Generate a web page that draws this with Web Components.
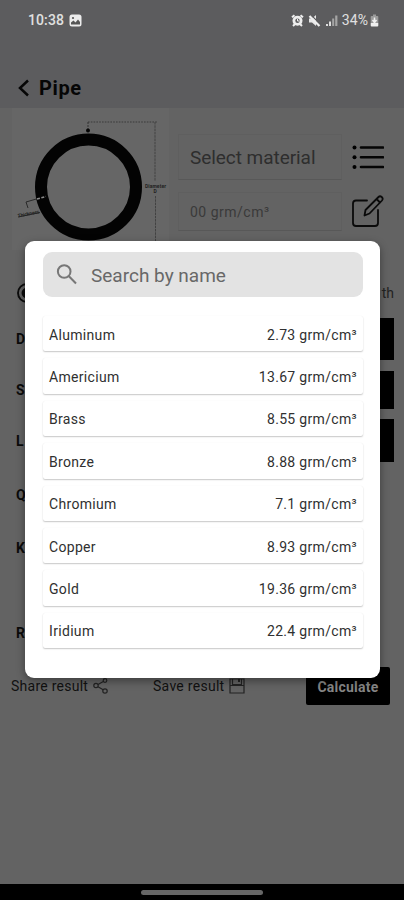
<!DOCTYPE html>
<html lang="en">
<head>
<meta charset="utf-8">
<title>Pipe</title>
<style>
  html, body { margin: 0; padding: 0; }
  body {
    width: 404px;
    height: 900px;
    overflow: hidden;
    font-family: Roboto, Arial, sans-serif;
    color: #0b0b0b;
    background: #636363;
  }
</style>
</head>
<body>
<pipe-screen></pipe-screen>

<script>
/* ===== STATUS BAR ===== */
class StatusBar extends HTMLElement {
  connectedCallback() {
    const shadow = this.attachShadow({ mode: 'open' });
    shadow.innerHTML = `
<style>
  :host {
    display: flex;
    align-items: center;
    justify-content: space-between;
    height: 40px;
    padding: 0 25px 0 28px;
    box-sizing: border-box;
    color: #e0e0e0;
    font-size: 14px;
    font-weight: 500;
  }
  div { display: flex; align-items: center; }
  svg { display: block; }
  .left { gap: 5px; }
  .left span { letter-spacing: 0.1px; }
  .right { gap: 4px; }
  .right span { letter-spacing: 0.1px; font-weight: 400; margin-right: -2px; }
</style>
<div class="left">
  <span>10:38</span>
  <svg width="13" height="13" viewBox="0 0 13 13">
    <rect x=".5" y=".5" width="12" height="12" rx="2.500" fill="#ececec"/>
    <path d="M2 10.500V8.500L4.500 6.500 6.500 8.500 9 5.500 11 8V10.500Z" fill="#555"/>
    <circle cx="4" cy="4" r="1.100" fill="#555"/>
  </svg>
</div>
<div class="right">
  <svg width="13" height="13" viewBox="0 0 13 13">
    <path d="M1 3.200 3.500 1.200M12 3.200 9.500 1.200M2 12 4 10M11 12 9 10" stroke="#eee" stroke-width="2"/>
    <circle cx="6.500" cy="6.800" r="5" fill="#eee"/>
    <circle cx="6.500" cy="6.800" r="2.200" fill="#5c5c5e"/>
    <path d="M6.500 5V7H8.200" fill="none" stroke="#eee" stroke-width="1"/>
  </svg>
  <svg width="13" height="13" viewBox="0 0 13 13">
    <path d="M1 4.500H4L8 1V12L4 8.500H1Z" fill="#e8e8e8"/>
    <path d="M3 1 12 10" stroke="#5c5c5e" stroke-width="1.200"/>
    <path d="M1.500 2 11.500 12" stroke="#eee" stroke-width="2.200"/>
  </svg>
  <svg width="13" height="13" viewBox="0 0 13 13">
    <path d="M1 12V10H3V12ZM4 12V7.500H6V12Z" fill="#ddd"/>
    <path d="M7.200 12V4.500H9.200V12ZM10.200 12V1.500H12.400V12Z" fill="#a5a5a5"/>
  </svg>
  <span>34%</span>
  <svg width="9" height="13" viewBox="0 0 9 13">
    <path d="M3 .5H6V2H7.500Q8.300 2 8.300 3V9H.7V3Q.7 2 1.500 2H3Z" fill="#9b9b9b"/>
    <path d="M.7 9H8.300V11.500Q8.300 12.500 7.300 12.500H1.700Q.7 12.500 .7 11.500Z" fill="#f0f0f0"/>
    <path d="M4.500 3.500V8M2.500 6 4.500 8.500 6.500 6" fill="none" stroke="#f0f0f0" stroke-width="1.500"/>
  </svg>
</div>
`;
  }
}
customElements.define('status-bar', StatusBar);

/* ===== APP BAR ===== */
class AppHeader extends HTMLElement {
  connectedCallback() {
    const shadow = this.attachShadow({ mode: 'open' });
    shadow.innerHTML = `
<style>
  :host {
    display: flex;
    align-items: center;
    gap: 9px;
    height: 68px;
    padding: 27px 18px 0;
    box-sizing: border-box;
    font-size: 20px;
    font-weight: 700;
    letter-spacing: 0.6px;
    color: #060606;
  }
  svg { display: block; }
</style>
<svg width="12" height="18" viewBox="0 0 12 18">
  <path d="M10 1.500 2 9 10 16.500" fill="none" stroke="#060606" stroke-width="2.500"/>
</svg>
<slot></slot>
`;
  }
}
customElements.define('app-header', AppHeader);

/* ===== PIPE CROSS-SECTION ===== */
class PipeDiagram extends HTMLElement {
  connectedCallback() {
    const shadow = this.attachShadow({ mode: 'open' });
    shadow.innerHTML = `
<style>
  :host { display: block; width: 157px; height: 142px; background: #666; }
  svg { display: block; }
  text { font-size: 5px; font-weight: 700; fill: #222; }
</style>
<svg width="157" height="142" viewBox="12 108 157 142">
  <circle cx="88.500" cy="187" r="47.500" fill="none" stroke="#030303" stroke-width="12"/>
  <path d="M88 122H157" fill="none" stroke="#3a3a3a" stroke-width="1.200" stroke-dasharray="1.600 1.200"/>
  <path d="M155 122V181M155.500 196V250" fill="none" stroke="#424242" stroke-width="1" stroke-dasharray="2.500 .8"/>
  <path d="M88 122V130" stroke="#333" stroke-width="1" stroke-dasharray="2 1"/>
  <circle cx="88" cy="130.500" r="2" fill="#050505"/>
  <text x="145" y="187.500" textLength="21">Diameter</text>
  <text x="153.500" y="192.500">D</text>
  <path d="M28 208 26 202 38 198.500M18 217 40 212.500" fill="none" stroke="#292929" stroke-width="1"/>
  <text x="18" y="217.500" textLength="22" transform="rotate(-11 18 217.500)">Thickness</text>
  <path d="M37 199 46 196.500" stroke="#8a8a8a" stroke-width="1.600" stroke-dasharray="3 1.500"/>
</svg>
`;
  }
}
customElements.define('pipe-diagram', PipeDiagram);

/* ===== MATERIAL FIELD + ICON BUTTON ===== */
class MaterialField extends HTMLElement {
  connectedCallback() {
    const shadow = this.attachShadow({ mode: 'open' });
    shadow.innerHTML = `
<style>
  :host { display: flex; align-items: center; gap: 10px; }
  .box {
    display: flex;
    align-items: center;
    width: 164px;
    height: 100%;
    padding-left: 11px;
    box-sizing: border-box;
    border: 1px solid #5f5f5f;
    border-bottom-color: #585858;
    color: var(--field-color, #2e2e2e);
    white-space: nowrap;
  }
  ::slotted(svg) { display: block; }
</style>
<div class="box"><slot></slot></div>
<slot name="icon"></slot>
`;
  }
}
customElements.define('material-field', MaterialField);

/* ===== FORM ROW ===== */
class FormRow extends HTMLElement {
  connectedCallback() {
    const shadow = this.attachShadow({ mode: 'open' });
    shadow.innerHTML = `
<style>
  :host {
    display: flex;
    align-items: center;
    justify-content: space-between;
    padding: 0 10px 0 16px;
    box-sizing: border-box;
    font-size: 14px;
    font-weight: 700;
  }
  .unit { width: 70px; height: 100%; background: #000; }
  :host(:not([unit])) .unit { display: none; }
</style>
<slot></slot>
<div class="unit"></div>
`;
  }
}
customElements.define('form-row', FormRow);

/* ===== BOTTOM ACTIONS ===== */
class ResultActions extends HTMLElement {
  connectedCallback() {
    const shadow = this.attachShadow({ mode: 'open' });
    shadow.innerHTML = `
<style>
  :host {
    display: flex;
    align-items: center;
    height: 38px;
    padding: 0 14px 0 11px;
    font-size: 14px;
    color: #111;
  }
  .act { display: flex; align-items: center; gap: 5px; width: 142px; letter-spacing: 0.25px; }
  .save { letter-spacing: 0.28px; width: 153px; }
  svg { display: block; }
  .calc {
    display: flex;
    align-items: center;
    justify-content: center;
    width: 84px;
    height: 38px;
    padding-top: 2px;
    box-sizing: border-box;
    border-radius: 2px;
    background: #000;
    color: #858585;
    font-weight: 700;
    letter-spacing: 0.25px;
  }
</style>
<div class="act">Share result
  <svg width="16" height="16" viewBox="0 0 16 16" fill="none" stroke="#222" stroke-width="1.200">
    <circle cx="3" cy="7.500" r="2.200"/><circle cx="12" cy="2.500" r="1.800"/><circle cx="12" cy="13" r="2.200"/>
    <path d="M5 6.500 10.300 3.500M5 8.800 10.200 11.800"/>
  </svg>
</div>
<div class="act save">Save result
  <svg width="16" height="16" viewBox="0 0 16 16" fill="none" stroke="#222" stroke-width="1.200">
    <path d="M1 1H15V15H1ZM3.500 1V6.500H12.500V1M1 7.500H15"/>
    <path d="M10 1V4" stroke-width="2"/>
  </svg>
</div>
<div class="calc">Calculate</div>
`;
  }
}
customElements.define('result-actions', ResultActions);

/* ===== DIALOG LIST ITEM ===== */
class MaterialItem extends HTMLElement {
  connectedCallback() {
    const shadow = this.attachShadow({ mode: 'open' });
    shadow.innerHTML = `
<style>
  :host {
    display: flex;
    flex: 0 0 auto;
    align-items: center;
    justify-content: space-between;
    height: 35.4px;
    padding: 2px 6px 0;
    box-sizing: border-box;
    border-radius: 2px;
    background: #fff;
    box-shadow: 0 1px 1.5px rgba(0,0,0,0.22), 0 0 1px rgba(0,0,0,0.06);
    font-size: 14px;
    letter-spacing: 0.32px;
    color: #303030;
  }
</style>
<span>${this.getAttribute('name') || ''}</span>
<span>${this.getAttribute('density') || ''}</span>
`;
  }
}
customElements.define('material-item', MaterialItem);

/* ===== MATERIAL DIALOG ===== */
class MaterialDialog extends HTMLElement {
  connectedCallback() {
    const shadow = this.attachShadow({ mode: 'open' });
    shadow.innerHTML = `
<style>
  :host {
    display: flex;
    flex-direction: column;
    padding: 11px 17px 0 18px;
    box-sizing: border-box;
    border-radius: 9px;
    background: #fff;
    box-shadow: 0 3px 8px rgba(0,0,0,0.4);
  }
  .search {
    display: flex;
    flex: 0 0 auto;
    align-items: center;
    gap: 13px;
    height: 45px;
    padding-left: 13px;
    border-radius: 9px;
    background: #e3e3e3;
    color: #686868;
    font-size: 19px;
    letter-spacing: 0;
  }
  .search span { padding-top: 1px; }
  svg { display: block; }
  .list {
    display: flex;
    flex-direction: column;
    gap: 7px;
    height: 345px;
    margin: 18px -2px 0;
    padding: 1px 2px 0;
    overflow: hidden;
  }
</style>
<div class="search">
  <svg width="22" height="22" viewBox="0 0 22 22" fill="none" stroke="#777" stroke-width="2">
    <circle cx="8.200" cy="7.500" r="6.300"/><path d="M12.700 12 20 19.500"/>
  </svg>
  <span>Search by name</span>
</div>
<div class="list"><slot></slot></div>
`;
  }
}
customElements.define('material-dialog', MaterialDialog);

/* ===== SCREEN ===== */
class PipeScreen extends HTMLElement {
  connectedCallback() {
    const shadow = this.attachShadow({ mode: 'open' });
    shadow.innerHTML = `
<style>
  :host {
    display: flex;
    flex-direction: column;
    position: relative;
    width: 404px;
    height: 900px;
    overflow: hidden;
    background: #636363;
  }
  .top { background: #5c5c5e; }
  .material { display: flex; height: 142px; padding: 0 12px; gap: 9px; }
  .fields { display: flex; flex-direction: column; gap: 12px; padding-top: 26px; }
  .fields material-field:first-child { height: 46px; font-size: 19px; letter-spacing: -0.05px; }
  .fields material-field:last-child {
    --field-color: #3a3a3a;
    height: 39px;
    font-size: 14px;
    letter-spacing: 0.5px;
  }
  .shape {
    display: flex;
    align-items: center;
    justify-content: space-between;
    height: 22px;
    margin: 32px 10px 0 17px;
    font-size: 14px;
    color: #222;
  }
  .form { display: flex; flex-direction: column; margin-top: 14px; }
  result-actions { margin-top: 13px; }
  .nav {
    display: flex;
    justify-content: center;
    height: 16px;
    margin-top: auto;
    background: #000;
  }
  .nav i { width: 122px; height: 5px; margin-top: 6px; border-radius: 3px; background: #666; }
  material-dialog { position: absolute; left: 25px; top: 241px; width: 355px; height: 437px; }
</style>

<div class="top">
  <status-bar></status-bar>
  <app-header>Pipe</app-header>
</div>

<div class="material">
  <pipe-diagram></pipe-diagram>
  <div class="fields">
    <material-field>Select material
      <svg slot="icon" width="32" height="26" viewBox="0 0 32 26">
        <path d="M9 3.500H31M9 13.300H31M9 23H31" stroke="#050505" stroke-width="2.600" stroke-linecap="round"/>
        <circle cx="2.500" cy="3.500" r="2"/><circle cx="2.500" cy="13.300" r="2"/><circle cx="2.500" cy="23" r="2"/>
      </svg>
    </material-field>
    <material-field>00 grm/cm³
      <svg slot="icon" width="32" height="36" viewBox="0 0 32 36" fill="none" stroke="#0a0a0a" stroke-width="1.800" stroke-linejoin="round" stroke-linecap="round">
        <path d="M15 6.500H4Q1 6.500 1 9.500V29Q1 32 4 32H23Q26 32 26 29V16"/>
        <path d="M12.500 21.500 13.500 16 26.500 3Q28 1.500 29.700 3 31.500 4.700 30 6.500L17.500 19.500ZM24.500 5 28 8.500"/>
      </svg>
    </material-field>
  </div>
</div>

<div class="shape">
  <svg width="20" height="20" viewBox="0 0 20 20" fill="none" stroke="#0c0c0c" stroke-width="1.900">
    <circle cx="10" cy="10" r="9"/><circle cx="10" cy="10" r="4.500" fill="#0c0c0c"/>
  </svg>
  <span>th</span>
</div>

<div class="form">
  <form-row unit style="height:42px">D</form-row>
  <form-row unit style="height:38px;margin-top:11px">S</form-row>
  <form-row unit style="height:43px;margin-top:10px">L</form-row>
  <form-row style="height:46px;margin-top:10px">Q</form-row>
  <form-row style="height:46px;margin-top:7px">K</form-row>
  <form-row style="height:42px;margin-top:41px">R</form-row>
</div>

<result-actions></result-actions>

<div class="nav"><i></i></div>

<material-dialog>
  <material-item name="Aluminum" density="2.73 grm/cm³"></material-item>
  <material-item name="Americium" density="13.67 grm/cm³"></material-item>
  <material-item name="Brass" density="8.55 grm/cm³"></material-item>
  <material-item name="Bronze" density="8.88 grm/cm³"></material-item>
  <material-item name="Chromium" density="7.1 grm/cm³"></material-item>
  <material-item name="Copper" density="8.93 grm/cm³"></material-item>
  <material-item name="Gold" density="19.36 grm/cm³"></material-item>
  <material-item name="Iridium" density="22.4 grm/cm³"></material-item>
</material-dialog>
`;
  }
}
customElements.define('pipe-screen', PipeScreen);
</script>
</body>
</html>
